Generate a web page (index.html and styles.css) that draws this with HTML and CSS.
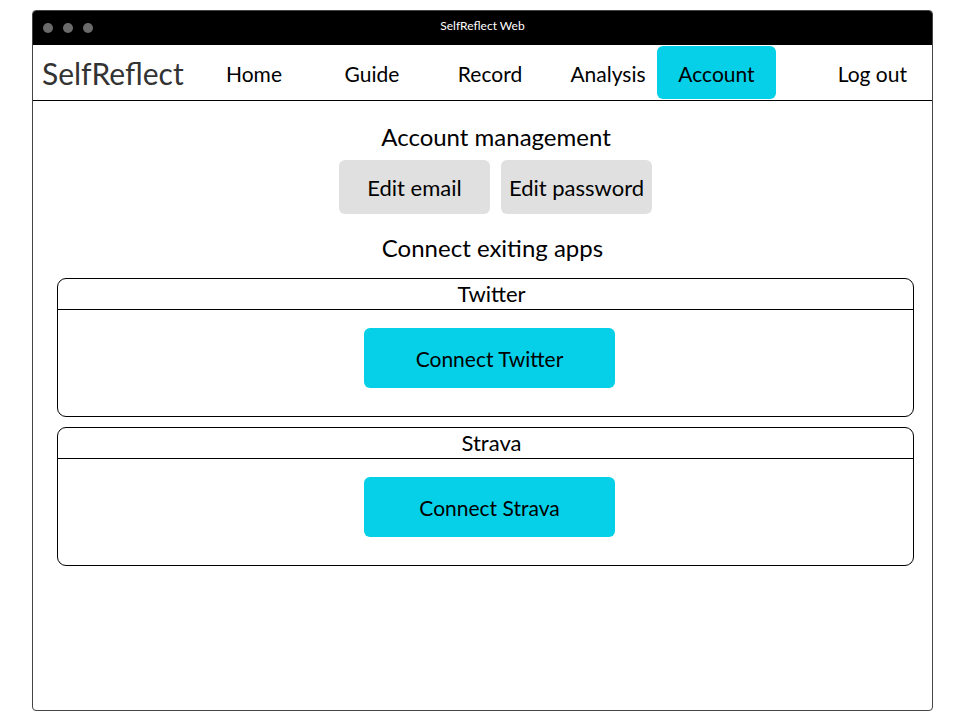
FILE: index.html
```html
<!DOCTYPE html>
<html>
<head>
<meta charset="utf-8">
<link rel="stylesheet" href="styles.css">
</head>
<body>
<div class="window">
  <div class="titlebar">
    <div class="dots"><span class="dot"></span><span class="dot"></span><span class="dot"></span></div>
    <div class="title">SelfReflect Web</div>
  </div>
  <nav class="nav">
    <div class="logo">SelfReflect</div>
    <a class="nav-item">Home</a>
    <a class="nav-item">Guide</a>
    <a class="nav-item">Record</a>
    <a class="nav-item">Analysis</a>
    <a class="nav-item active">Account</a>
    <a class="nav-item logout">Log out</a>
  </nav>
  <main class="content">
    <h2 class="heading">Account management</h2>
    <div class="btn-row">
      <button class="btn gray">Edit email</button>
      <button class="btn gray">Edit password</button>
    </div>
    <h2 class="heading apps">Connect exiting apps</h2>
    <section class="card">
      <div class="card-head">Twitter</div>
      <div class="card-body"><button class="btn cyan">Connect Twitter</button></div>
    </section>
    <section class="card">
      <div class="card-head">Strava</div>
      <div class="card-body"><button class="btn cyan">Connect Strava</button></div>
    </section>
  </main>
</div>
</body>
</html>
```
FILE: styles.css
```css
* { box-sizing: border-box; }
html, body { margin: 0; padding: 0; background: #fff; }
body {
  font-family: Lato, "Open Sans", sans-serif;
  color: #000;
  padding: 10px 0 0 32px;
}
.window {
  width: 901px;
  height: 701px;
  border: 1px solid #444;
  border-radius: 4px;
  overflow: hidden;
  display: flex;
  flex-direction: column;
}
.titlebar {
  height: 34px;
  background: #000;
  display: flex;
  align-items: center;
  position: relative;
  flex: none;
}
.dots { display: flex; gap: 10px; padding-left: 10px; }
.dot { width: 10px; height: 10px; border-radius: 50%; background: #6b6b6b; }
.title {
  position: absolute;
  left: 0; right: 0;
  top: 7px;
  text-align: center;
  color: #fff;
  font-size: 12px;
}
.nav {
  height: 56px;
  border-bottom: 1px solid #000;
  display: flex;
  align-items: stretch;
  flex: none;
}
.logo {
  font-size: 30px;
  color: #333;
  padding-left: 9px;
  width: 162px;
  display: flex;
  align-items: center;
}
.nav-item {
  width: 118px;
  display: flex;
  align-items: center;
  justify-content: center;
  font-size: 21px;
  margin: 1px 0;
  padding-top: 2px;
}
.nav-item.active {
  background: #06d0e8;
  border-radius: 6px;
  width: 119px;
  margin-left: -10px;
}
.nav-item.logout { margin-left: auto; width: auto; padding-right: 25px; }
.content {
  flex: 1;
  padding: 21px 18px 0 24px;
  display: flex;
  flex-direction: column;
  align-items: center;
}
.heading {
  margin: 0;
  font-weight: normal;
  font-size: 24px;
  line-height: 30px;
  padding-left: 21px;
}
.btn-row {
  display: flex;
  gap: 11px;
  margin-top: 8px;
  padding-left: 20px;
}
.btn {
  border: none;
  font-family: inherit;
  color: #000;
  border-radius: 6px;
}
.btn.gray { background: #e0e0e0; width: 151px; height: 54px; font-size: 22px; }
.btn.cyan { background: #06d0e8; width: 251px; height: 60px; font-size: 21px; }
.heading.apps { margin-top: 19px; padding-left: 14px; }
.card {
  align-self: stretch;
  border: 1px solid #000;
  border-radius: 9px;
  margin-top: 15px;
  height: 139px;
  display: flex;
  flex-direction: column;
}
.card + .card { margin-top: 10px; }
.card-head {
  height: 31px;
  border-bottom: 1px solid #000;
  text-align: center;
  font-size: 22px;
  line-height: 30px;
  padding-left: 12px;
}
.card-body {
  display: flex;
  justify-content: center;
  padding-top: 18px;
  padding-left: 8px;
}
```
